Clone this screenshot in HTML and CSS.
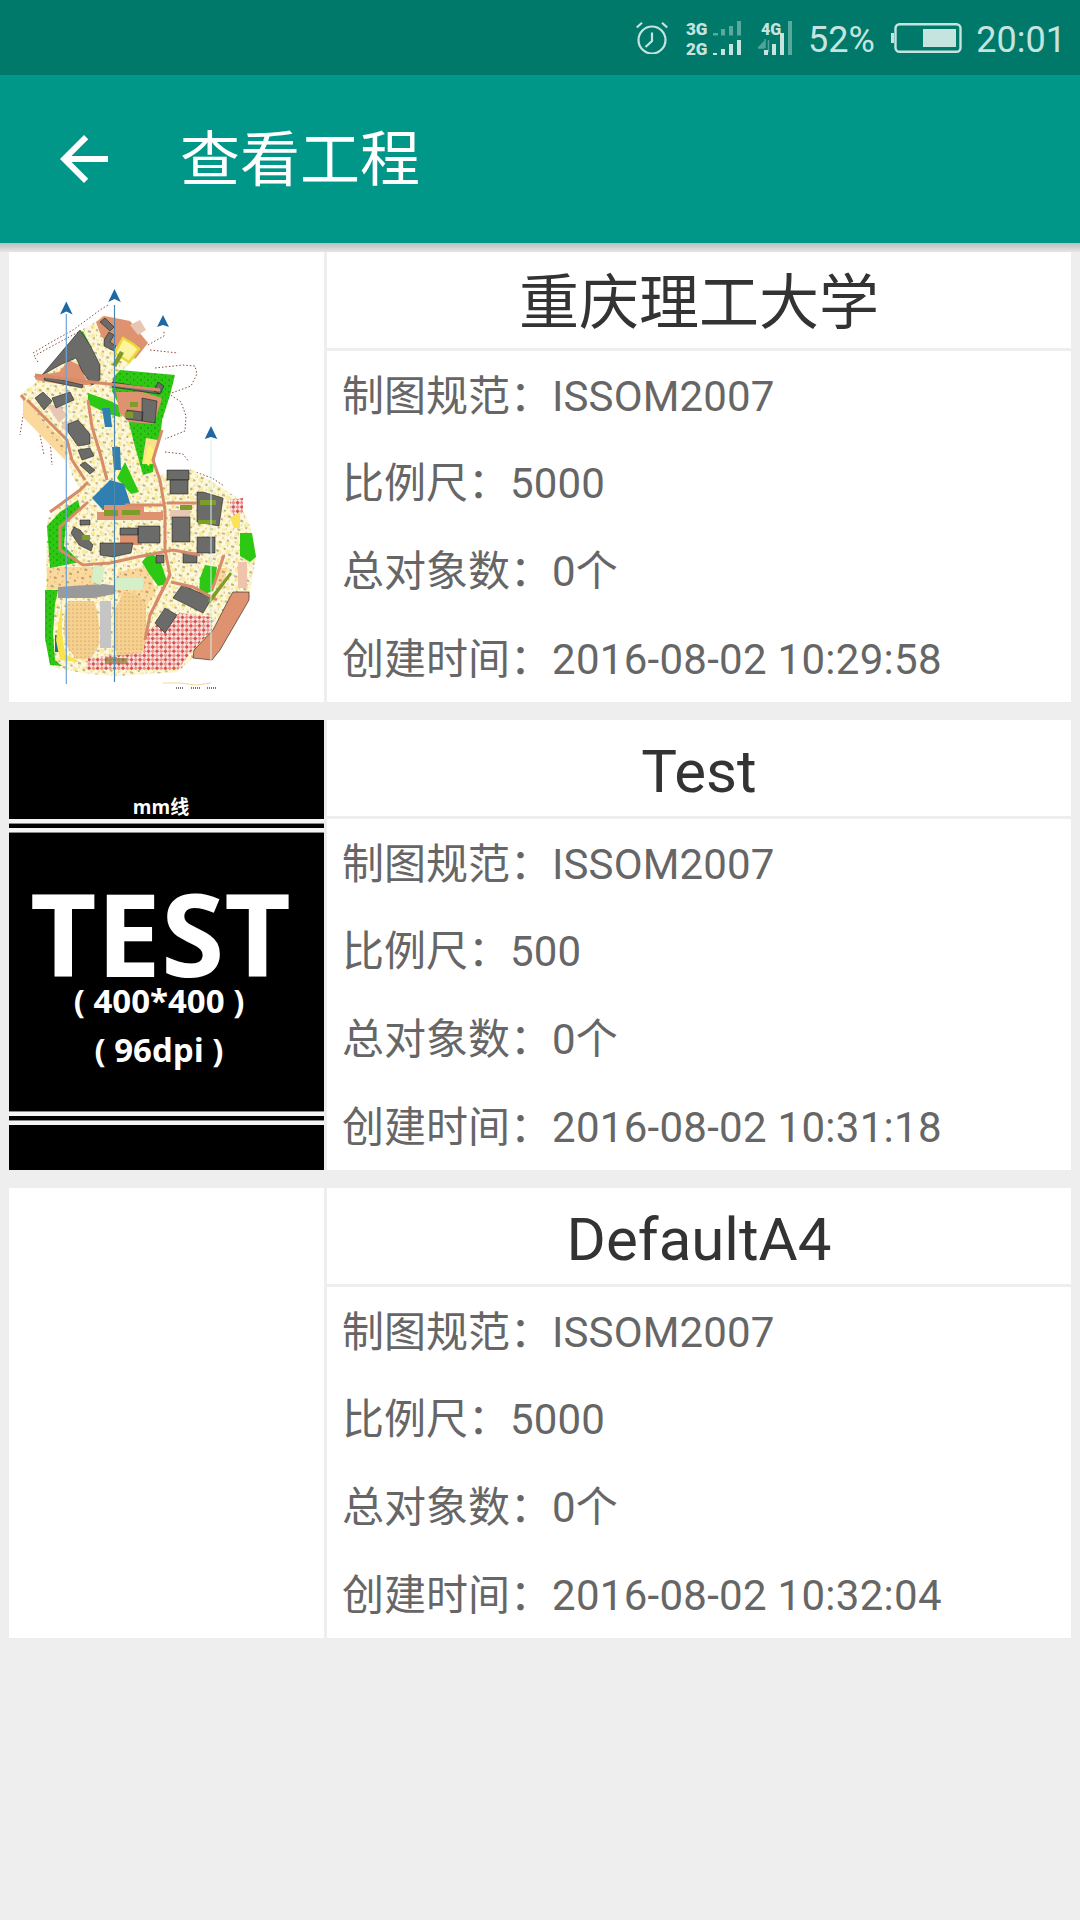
FILE: index.html
```html
<!DOCTYPE html>
<html lang="zh-CN">
<head>
<meta charset="utf-8">
<title>查看工程</title>
<link rel="stylesheet" href="styles.css">
</head>
<body>
<div class="status">
  <svg class="icon-alarm" width="32" height="32" viewBox="0 0 32 32">
    <circle cx="16" cy="18" r="13.500" fill="none" stroke="#c6e4df" stroke-width="2.2"/>
    <path d="M16 10.500V19L9.500 25M.8 5.500L6 .8M31.200 5.500L26 .8" fill="none" stroke="#c6e4df" stroke-width="2.200"/>
  </svg>
  <div class="net net-dual">
    <span class="net-label net-label-a">3G</span>
    <span class="net-label net-label-b">2G</span>
    <svg class="net-bars" width="56" height="34" viewBox="0 0 56 34">
      <path d="M27 12h5v2.500h-5zM35 8h4v6.500h-4zM43 5h4v9.500h-4zM51 0h4v14.500h-4z" fill="#c6e4df" opacity=".45"/>
      <path d="M27 32h4v2h-4zM35 28h4v6h-4zM43 23h4v11h-4zM51 19h4v15h-4z" fill="#c6e4df"/>
    </svg>
  </div>
  <div class="net net-single">
    <span class="net-label net-label-a">4G</span>
    <svg class="net-bars" width="35" height="34" viewBox="0 0 35 34">
      <path d="M0 27l6-6v6zM7 18v9M10.500 19v12" fill="#c6e4df" stroke="#c6e4df" stroke-width="1.500" opacity=".4"/>
      <path d="M6 29h4v5H6zM14 23h4v11h-4zM22 12h4v22h-4z" fill="#c6e4df"/>
      <path d="M30 0h4v34h-4z" fill="#c6e4df" opacity=".45"/>
    </svg>
  </div>
  <span class="status-text status-pct">52%</span>
  <svg class="icon-battery" width="71" height="30" viewBox="0 0 71 30">
    <path d="M0 10h3v10H0z" fill="#c6e4df"/>
    <rect x="4.500" y="1.300" width="65" height="27.400" rx="4" fill="none" stroke="#c6e4df" stroke-width="2.400"/>
    <rect x="32" y="6" width="33" height="18" fill="#c6e4df"/>
  </svg>
  <span class="status-text">20:01</span>
</div>
<header class="toolbar">
  <svg class="back" width="72" height="72" viewBox="0 0 24 24"><path d="M20 11H7.830l5.590-5.590L12 4l-8 8 8 8 1.410-1.410L7.830 13H20v-2z" fill="#fff"/></svg>
  <h1 class="toolbar-title">查看工程</h1>
</header>
<div class="toolbar-shadow"></div>
<main class="list">
  <article class="card">
    <div class="thumb">
      <svg class="thumb-art" viewBox="9 252 315 450">
        <defs>
          <pattern id="dots" width="9" height="9" patternUnits="userSpaceOnUse">
            <rect width="9" height="9" fill="#fdf8dc"/>
            <circle cx="3" cy="3" r="2.400" fill="#f8eda0"/>
            <circle cx="7.500" cy="7.500" r="1.800" fill="#f9f0b4"/>
          </pattern>
          <pattern id="hatch" width="6" height="6" patternUnits="userSpaceOnUse" patternTransform="rotate(45)">
            <rect width="6" height="6" fill="#f7e4de"/>
            <rect width="3" height="3" fill="#d9524f"/>
            <rect x="3" y="3" width="3" height="3" fill="#e9908b"/>
          </pattern>
          <pattern id="sand" width="4" height="4" patternUnits="userSpaceOnUse">
            <rect width="4" height="4" fill="#f6d08e"/>
            <circle cx="1" cy="1" r=".5" fill="#a87a3c"/>
          </pattern>
          <pattern id="forest" width="7" height="6" patternUnits="userSpaceOnUse">
            <rect width="7" height="6" fill="#2cc814"/>
            <path d="M0 2h2M4 5h1" stroke="#1c7b10" stroke-width=".8"/>
          </pattern>
          <pattern id="speck" width="13" height="9" patternUnits="userSpaceOnUse" patternTransform="rotate(20)">
            <path d="M1 2h3M8 7h2" stroke="#2c1d12" stroke-width="1"/>
            <path d="M3 6h1M10 3h1" stroke="#b4533a" stroke-width="1"/>
          </pattern>
          <clipPath id="outline">
            <path d="M21 393l13-9 8-9 38-45h3l12-8 8-7 22 5 23 23-12 15-16 14 55 3-5 20-7 25-1 10-9 30 5 15 35-5 32 20 11 7 14 28 6 30-7 45-29 50-8 10-19-2-15 14-58 4-32-2-36-7-7-27 1-50 1-70 13-15 20-15-8-15-5-17z"/>
          </clipPath>
        </defs>
        <g fill="none" stroke="#8d4a3a" stroke-width="1" stroke-dasharray="1.500 2">
          <path d="M33 353l15-9 25-14 27-20 8-5"/>
          <path d="M38 362l-4-6 22-12 30-16"/>
          <path d="M148 345l16-9 0-6M150 350l28 3"/>
          <path d="M155 368l28-3 12 1 2 8-6 12-22 8 12 8 5 14-1 15-20 8"/>
          <path d="M24 410l-4 25M38 425l6 30M50 440l2 25"/>
          <path d="M165 452l18 2 6 8M190 470l22 8 12 8"/>
        </g>
        <path fill="url(#dots)" d="M21 393l13-9 8-9 38-45h3l12-8 8-7 22 5 23 23-12 15-16 14 55 3-5 20-7 25-1 10-9 30 5 15 35-5 32 20 11 7 14 28 6 30-7 45-29 50-8 10-19-2-15 14-58 4-32-2-36-7-7-27 1-50 1-70 13-15 20-15-8-15-5-17z"/>
        <path fill="#fbd89b" d="M23 398l44 47-2 15-42-43zM47 567h55l-4 20-51 3zM118 572l30-6 8 26-14 20-26-20zM215 568l12 0-3 22-12-6z"/>
        <rect x="9" y="252" width="315" height="450" fill="url(#speck)" clip-path="url(#outline)" opacity=".6"/>
        <path fill="url(#forest)" d="M113 378l7-8 55 5-5 20-8 25-1 10-5 20-3 22-10 3-9-32-7-28-10-14-5-10z"/>
        <path fill="#2cc814" d="M83 331l6 12 10 24-3 14-5-6 4-16-10-18-6-8zM88 393l22 8 12 6-2 10-12-3-20-10zM125 462l14 30-8 2-14-16z"/>
        <path fill="#fbe08f" d="M146 438l12 2-4 24-12 0z"/>
        <path fill="#fff275" d="M149 444l5 6-5 16-5-4z"/>
        <path fill="url(#forest)" d="M60 512l18-12 2 8-14 14-2 24 16 16-30 6-3-42zM45 590h13l-3 14-2 30 2 26 7 6-12-1-5-27z"/>
        <path fill="#2cc814" d="M240 533l12 0 4 24-6 5-10-6zM150 552l10 8 8 24-10 2-10-14-6-10zM205 565l12 2-4 24-14 5 1-18z"/>
        <path fill="#2f7fb0" d="M102 408h8l2 19-7 0zM112 447h8l1 23-7 0zM92 498l18-18 14 4 7 22 0 8-16-4-12 0z"/>
        <path fill="#9a9a9c" d="M58 587l45-3 15 2-4 8-20 4-36 0z"/>
        <path fill="url(#sand)" d="M68 601h26c5 12 6 30 5 44l-8 14H76l-10-14c-3-14-3-32 2-44zM124 592c10 0 18 4 22 14l0 40-10 16h-14l-8-14V610z"/>
        <path fill="#c5c5c5" d="M100 601h11v47h-11z"/>
        <path fill="url(#hatch)" d="M147 630l33-17 32 4v13l-22 23-12 17-91 0 1-12 55-5zM230 500l13-2 0 14-7 6-6-8z"/>
        <path fill="#fce25a" d="M230 518l10-6 0 16-6 0z"/>
        <path fill="#8a7a3a" d="M105 657h12v7h-12zM117 658h10v6h-10z" opacity=".7"/>
        <path fill="#df9270" stroke="#222" stroke-width=".6" d="M233 592h16v8l-29 50-8 10-19-2 1-8 19-20 17-33z"/>
        <path fill="#f0c4ac" d="M238 562h9v26h-9z"/>
        <path fill="#df9270" d="M34 376l25-4 10-12 12 6 5 14 15 4-30 2-35-6zM96 322l8-6 26 5 18 22-12 15-12-9-18-6-6-10zM116 392l26 0 20 6-8 26-25-2-10-10zM120 530h22v15h-22zM104 505h40v14h-40zM97 512h66v8H97z"/>
        <path fill="#e7c6b4" d="M140 320l-10 5 8 10 8-5zM170 510h20v10h-20zM47 405l12 0 8 10-8 8zM65 420l8 4-6 8-6-5z"/>
        <path fill="#fdf4a0" stroke="#e9d93a" stroke-width="2.500" d="M123 338l10 6 6 5-10 13-14-9z"/>
        <g fill="#6b6c69" stroke="#111" stroke-width=".5">
          <path d="M42 375l38-45 10 15 10 20v15l-8 5-10-14-6-13-14 6z"/>
          <path d="M45 376l38 9-1 3-38-8z"/>
          <path d="M35 398l8-6 9 9-8 9z"/>
          <path d="M52 398l18-6 4 8-18 8z"/>
          <path d="M68 424l10-4 12 14v10l-12 2-10-14z"/>
          <path d="M78 450l12-2 4 8-12 4z"/>
          <path d="M80 465l5-3 10 8-5 4z"/>
          <path d="M100 322l5-4 9 9-4 4zM104 340l5-8 5 3-4 7 6 4-2 5-10-5z"/>
          <path d="M112 382l48 8-1 4-47-7z"/>
          <path d="M142 398l15 3-2 22-13-2zM127 410l16 2-1 9-16-2zM158 382l6 4-4 8-6-3z"/>
          <path d="M167 470h22v10h-22z"/>
          <path d="M172 517h18v25h-18z"/>
          <path d="M197 492h6l20 6-4 28-22-4zM197 537h18v16h-18z"/>
          <path d="M138 526h22v17h-22zM120 528h18v7h-18z"/>
          <path d="M100 543h33l-2 10-18 4-13-2z"/>
          <path d="M74 527l6 3 13 15-2 6-12-6-8-12zM80 520h10v5H80z"/>
          <path d="M182 585l30 13-9 15-30-15z"/>
          <path d="M165 608l12 7-12 18-10-10z"/>
          <path d="M183 553h14v10h-14zM156 555h8v8h-8z"/>
          <path d="M170 480h18v14h-18z"/>
        </g>
        <g fill="none" stroke="#d88b68" stroke-width="3">
          <path d="M35 375l65 8 60 7"/>
          <path d="M88 400l4 27 8 26 7 27"/>
          <path d="M27 400l40 40 5 20 13 20"/>
          <path d="M162 430l-9 30 7 20 5 30v40l5 25-20 40-5 25"/>
          <path d="M88 502l-28 25v23l23 15 27-2 27-6 36-7 27 5"/>
          <path d="M167 503h30M125 505l40 0"/>
          <path d="M171 582l22 5 24 13M170 575l-15 30"/>
          <path d="M212 590l12-35"/>
          <path d="M50 512l30-22 8-8M25 400l-4-5"/>
        </g>
        <g fill="#7e9c2a">
          <path d="M112 365l8-14 4 2-8 14zM104 510h14v6h-14zM122 510h18v5h-18zM180 505h12v5h-12zM200 500h16v5h-16zM198 520h18v4h-18zM82 535h8v5h-8zM208 600l22-28 2 2-22 30zM125 412h8v6h-8zM130 402h8v5h-8z"/>
        </g>
        <path fill="#d5f0c8" d="M93 565l12 2-4 18-9-3zM115 578h28v12h-28z"/>
        <path fill="#1f6a8a" d="M55 635h4v17h-4z"/>
        <path fill="#f9e24a" d="M62 600l-6 40 4 20 20 2-15-8-3-20z"/>
        <path d="M163 683h17l16 2 15-2" fill="none" stroke="#f2d8a0" stroke-width="1"/>
        <path d="M176 688h8M191 688h9M207 688h9" fill="none" stroke="#777" stroke-width="2" stroke-dasharray="1 1"/>
        <path d="M66.300 314v370" stroke="#6ea3d6" stroke-width="1.200" fill="none"/>
        <path d="M114.500 305v377" stroke="#4f88ad" stroke-width="1.200" fill="none"/>
        <path d="M211 440v222" stroke="#d8efe8" stroke-width="1" fill="none"/>
        <g fill="#1f68a4">
          <path d="M66.300 301.500l6.300 13-6.300-3-6.300 3z"/>
          <path d="M114.500 289l6.300 13-6.300-3-6.300 3z"/>
          <path d="M163 315l6 12-6-2-6 2z"/>
          <path d="M211 426l6.300 13-6.300-2-6.300 2z"/>
        </g>
      </svg>
    </div>
    <div class="info">
      <h2 class="card-title">重庆理工大学</h2>
      <p class="row">制图规范：<span class="val">ISSOM2007</span></p>
      <p class="row">比例尺：<span class="val">5000</span></p>
      <p class="row">总对象数：<span class="val">0</span>个</p>
      <p class="row">创建时间：<span class="val val-date">2016-08-02 10:29:58</span></p>
    </div>
  </article>
  <article class="card">
    <div class="thumb thumb-black">
      <svg class="thumb-art" viewBox="9 720 315 450">
        <rect x="9" y="720" width="315" height="450" fill="#000"/>
        <text class="art-small" x="161" y="814">mm线</text>
        <path d="M9 819h315v4H9zM9 828h315v4H9zM9 1112h315v4H9zM9 1121h315v4H9z" fill="#f4f4f4"/>
        <path d="M9 823h315v1H9zM9 832h315v1H9zM9 1111h315v1H9zM9 1120h315v1H9z" fill="#8a8a8a"/>
        <text class="art-big" x="160.500" y="977">TEST</text>
        <text class="art-mid" x="159" y="1013">( 400*400 )</text>
        <text class="art-mid" x="159" y="1062">( 96dpi )</text>
      </svg>
    </div>
    <div class="info">
      <h2 class="card-title">Test</h2>
      <p class="row">制图规范：<span class="val">ISSOM2007</span></p>
      <p class="row">比例尺：<span class="val">500</span></p>
      <p class="row">总对象数：<span class="val">0</span>个</p>
      <p class="row">创建时间：<span class="val val-date">2016-08-02 10:31:18</span></p>
    </div>
  </article>
  <article class="card">
    <div class="thumb"></div>
    <div class="info">
      <h2 class="card-title">DefaultA4</h2>
      <p class="row">制图规范：<span class="val">ISSOM2007</span></p>
      <p class="row">比例尺：<span class="val">5000</span></p>
      <p class="row">总对象数：<span class="val">0</span>个</p>
      <p class="row">创建时间：<span class="val val-date">2016-08-02 10:32:04</span></p>
    </div>
  </article>
</main>
</body>
</html>
```
FILE: styles.css
```css
* { box-sizing: border-box; }
html, body { margin: 0; padding: 0; }
body {
  width: 1080px;
  height: 1920px;
  background: #eeeeee;
  font-family: Roboto, "Noto Sans CJK SC", sans-serif;
  overflow: hidden;
}
.status {
  height: 75px;
  background: #00796b;
  display: flex;
  align-items: center;
  justify-content: flex-end;
  padding-right: 14px;
  color: #c6e4df;
}
.status-text { font-size: 36px; line-height: 1; margin-top: 4px; }
.icon-alarm { margin-right: 18px; }
.net { position: relative; height: 34px; }
.net-dual { width: 56px; margin-right: 16px; }
.net-single { width: 35px; margin-right: 15px; }
.net-label {
  position: absolute;
  left: 0;
  font-size: 17px;
  line-height: 17px;
  font-weight: 900;
  z-index: 1;
}
.net-label-a { top: 0; }
.net-label-b { top: 20px; }
.net-single .net-label { left: 3px; font-size: 16px; }
.net-bars { position: absolute; right: 0; top: 0; }
.status-pct { margin-right: 16px; }
.icon-battery { margin-right: 14.500px; }
.toolbar {
  height: 168px;
  background: #009688;
  display: flex;
  align-items: center;
  padding-left: 48px;
  gap: 60px;
}
.toolbar-title {
  margin: 4px 0 0;
  font-size: 60px;
  font-weight: 400;
  color: #fff;
  line-height: 1;
}
.toolbar-shadow {
  height: 9px;
  background: linear-gradient(#bdbdbd, #e6e6e6);
}
.list {
  display: flex;
  flex-direction: column;
  gap: 18px;
  padding: 0 9px;
}
.card { height: 450px; display: flex; gap: 3px; }
.thumb { width: 315px; background: #fff; flex: none; }
.thumb-art { display: block; width: 315px; height: 450px; }
.thumb-black { background: #000; }
.info { flex: 1; background: #fff; display: flex; flex-direction: column; }
.card-title {
  margin: 0;
  height: 99px;
  padding-top: 8px;
  border-bottom: 3px solid #eeeeee;
  font-size: 60px;
  font-weight: 400;
  color: #333333;
  text-align: center;
  line-height: 88px;
}
.row {
  margin: 0;
  flex: 1;
  min-height: 0;
  padding: 3.500px 0 0 15px;
  font-size: 42px;
  line-height: 84px;
  color: #666666;
}
.val { letter-spacing: .12px; }
.val-date { letter-spacing: .28px; }
.art-big, .art-mid, .art-small {
  font-family: "Open Sans", sans-serif;
  font-weight: 700;
  text-anchor: middle;
  fill: #fff;
}
.art-big { font-size: 115px; }
.art-mid { font-size: 33px; }
.art-small { font-size: 19px; font-family: "Open Sans", "Noto Sans CJK SC", sans-serif; }
```
